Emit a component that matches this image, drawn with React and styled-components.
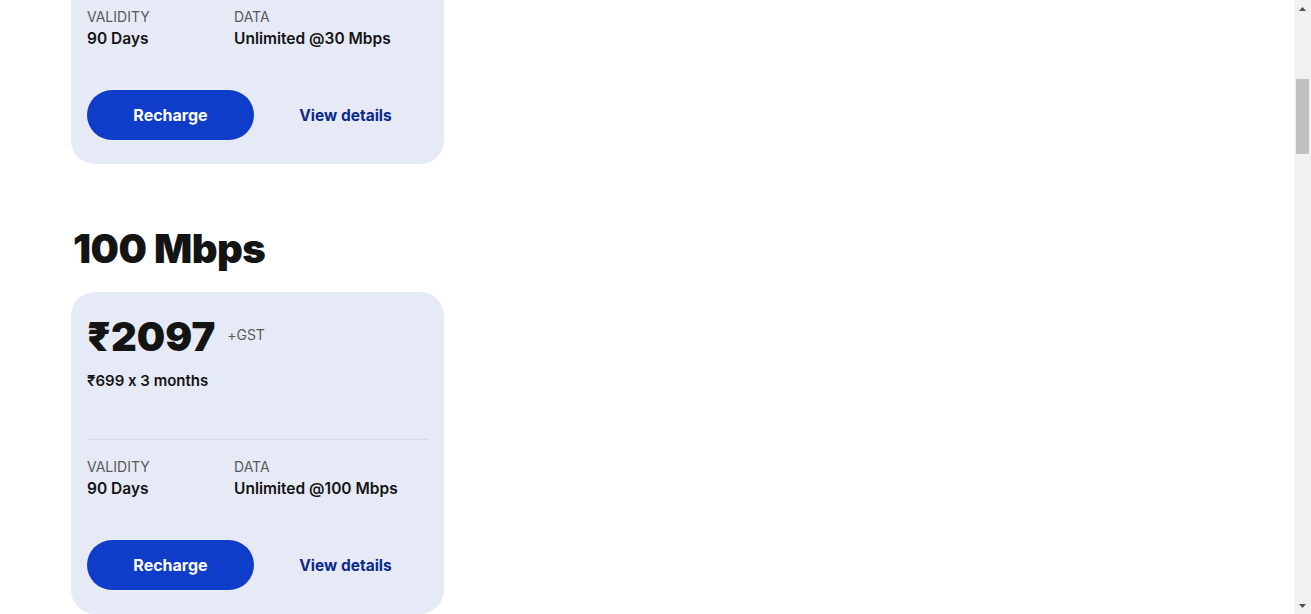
import React, { useLayoutEffect, useRef, useState } from 'react';
import styled, { createGlobalStyle } from 'styled-components';

const GlobalStyle = createGlobalStyle`
  html, body {
    margin: 0;
    padding: 0;
    background: #ffffff;
    overflow: hidden;
  }
  body {
    font-family: Inter, "Noto Sans", "Liberation Sans", sans-serif;
    font-feature-settings: "calt" 0;
    color: #141414;
  }
  * {
    box-sizing: border-box;
  }
`;

const plans = [
  { speed: '30 Mbps', total: '1197', monthly: '399' },
  { speed: '100 Mbps', total: '2097', monthly: '699' },
  { speed: '150 Mbps', total: '2997', monthly: '999' },
  { speed: '300 Mbps', total: '4497', monthly: '1499' },
  { speed: '500 Mbps', total: '7497', monthly: '2499' },
  { speed: '1 Gbps', total: '11997', monthly: '3999' },
];

const ARROW = 17;

const App = () => {
  const viewportRef = useRef(null);
  const [thumb, setThumb] = useState({ top: ARROW, height: 75 });

  const updateThumb = () => {
    const el = viewportRef.current;
    if (!el) return;
    const track = el.clientHeight - ARROW * 2;
    const height = Math.max(20, Math.round((track * el.clientHeight) / el.scrollHeight));
    const maxScroll = el.scrollHeight - el.clientHeight || 1;
    const top = ARROW + Math.round(((track - height) * el.scrollTop) / maxScroll);
    setThumb({ top, height });
  };

  // the screenshot is taken part-way down the plans page
  useLayoutEffect(() => {
    if (viewportRef.current) viewportRef.current.scrollTop = 506;
    updateThumb();
  }, []);

  return (
    <>
      <GlobalStyle />
      <Window>
        <Viewport ref={viewportRef} onScroll={updateThumb}>
          <Page>
            <Container>
              <PageHeader>
                <PageTitle>Recharge plans</PageTitle>
              </PageHeader>
              {plans.map((plan) => (
                <Section key={plan.speed}>
                  <SpeedTitle>{plan.speed}</SpeedTitle>
                  <Card>
                    <PriceRow>
                      <Price>₹{plan.total}</Price>
                      <Tax>+GST</Tax>
                    </PriceRow>
                    <Breakdown>₹{plan.monthly} x 3 months</Breakdown>
                    <Divider />
                    <Specs>
                      <Spec>
                        <SpecLabel>VALIDITY</SpecLabel>
                        <SpecValue>90 Days</SpecValue>
                      </Spec>
                      <Spec>
                        <SpecLabel>DATA</SpecLabel>
                        <SpecValue>Unlimited @{plan.speed}</SpecValue>
                      </Spec>
                    </Specs>
                    <Actions>
                      <RechargeButton>Recharge</RechargeButton>
                      <DetailsButton>View details</DetailsButton>
                    </Actions>
                  </Card>
                </Section>
              ))}
            </Container>
          </Page>
        </Viewport>
        <ScrollBar>
          <ScrollArrow>
            <svg width="7" height="4" viewBox="0 0 7 4">
              <polygon points="0,4 3.5,0 7,4" fill="#505050" />
            </svg>
          </ScrollArrow>
          <ScrollTrack>
            <ScrollThumb style={{ top: thumb.top - ARROW, height: thumb.height }} />
          </ScrollTrack>
          <ScrollArrow>
            <svg width="7" height="4" viewBox="0 0 7 4">
              <polygon points="0,0 7,0 3.5,4" fill="#505050" />
            </svg>
          </ScrollArrow>
        </ScrollBar>
      </Window>
    </>
  );
};

const Window = styled.div`
  display: flex;
  height: 100vh;
`;

const Viewport = styled.div`
  flex: 1;
  height: 100%;
  overflow-y: scroll;
  scrollbar-width: none;

  &::-webkit-scrollbar {
    display: none;
  }
`;

const ScrollBar = styled.div`
  width: 17px;
  flex-shrink: 0;
  background: #f1f1f1;
  display: flex;
  flex-direction: column;
`;

const ScrollArrow = styled.div`
  height: 17px;
  display: flex;
  align-items: center;
  justify-content: center;
`;

const ScrollTrack = styled.div`
  flex: 1;
  position: relative;
`;

const ScrollThumb = styled.div`
  position: absolute;
  left: 2px;
  right: 2px;
  background: #c1c1c1;
`;

const Page = styled.div`
  min-height: 4748px;
`;

const Container = styled.div`
  max-width: 1152px;
  margin: 0 auto;
`;

const PageHeader = styled.header`
  height: 220px;
  display: flex;
  align-items: flex-end;
  padding-bottom: 24px;
`;

const PageTitle = styled.h1`
  margin: 0;
  font-size: 48px;
  font-weight: 900;
  letter-spacing: -1px;
`;

const Section = styled.section`
  margin-top: 61px;
`;

const SpeedTitle = styled.h2`
  margin: 0 0 19px 2px;
  font-size: 40px;
  line-height: 48px;
  font-weight: 900;
  letter-spacing: -0.5px;
  color: #141414;
`;

const Card = styled.div`
  width: 373px;
  background: #e6eaf6;
  border-radius: 24px;
  padding: 21px 16px 24px;
  display: flex;
  flex-direction: column;
`;

const PriceRow = styled.div`
  display: flex;
  align-items: center;
  gap: 12px;
`;

const Price = styled.div`
  font-size: 40px;
  line-height: 48px;
  font-weight: 900;
  letter-spacing: 0;
`;

const Tax = styled.span`
  font-size: 14px;
  color: #595959;
  margin-top: -6px;
`;

const Breakdown = styled.div`
  margin-top: 10px;
  font-size: 15px;
  line-height: 20px;
  font-weight: 600;
`;

const Divider = styled.hr`
  margin: 48px 0 0;
  border: none;
  border-top: 1px solid #d6dae6;
`;

const Specs = styled.div`
  display: grid;
  grid-template-columns: 147px 1fr;
  margin-top: 17px;
`;

const Spec = styled.div`
  display: flex;
  flex-direction: column;
  gap: 2px;
`;

const SpecLabel = styled.span`
  font-size: 14px;
  line-height: 20px;
  color: #595959;
`;

const SpecValue = styled.span`
  font-size: 15.5px;
  line-height: 20px;
  font-weight: 600;
`;

const Actions = styled.div`
  display: grid;
  grid-template-columns: 167px 167px;
  gap: 8px;
  margin-top: 41px;
`;

const RechargeButton = styled.button`
  height: 50px;
  border: none;
  border-radius: 25px;
  background: #0f3cc9;
  color: #ffffff;
  font-family: inherit;
  font-size: 16px;
  font-weight: 700;
  cursor: pointer;
`;

const DetailsButton = styled.button`
  height: 50px;
  border: none;
  background: transparent;
  color: #0c2a8c;
  font-family: inherit;
  font-size: 15.5px;
  font-weight: 700;
  cursor: pointer;
`;

export default App;
